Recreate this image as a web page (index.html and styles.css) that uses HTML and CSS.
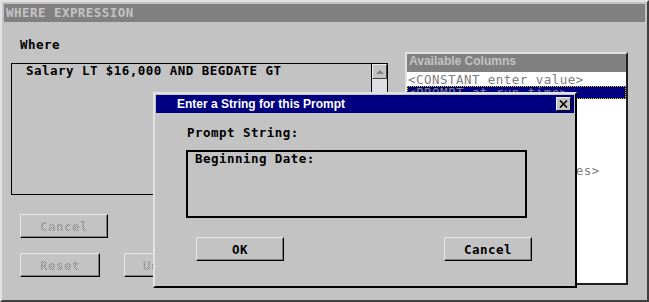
FILE: index.html
```html
<!DOCTYPE html>
<html lang="en">
<head>
    <meta charset="UTF-8">
    <meta name="viewport" content="width=device-width, initial-scale=1.0">
    <title>Where Expression</title>
    <link rel="stylesheet" href="styles.css">
</head>
<body>
    <div class="window">
        <div class="titlebar">WHERE EXPRESSION</div>
        <div class="content">
            <div class="left">
                <div class="label">Where</div>
                <div class="where-box">
                    <div class="where-text">Salary LT $16,000 AND BEGDATE GT</div>
                    <div class="scrollbar">
                        <div class="scroll-up"><span class="arrow-up"></span></div>
                        <div class="scroll-track"></div>
                    </div>
                </div>
                <div class="btn-row first">
                    <button class="btn wide" disabled><span class="stipple">Cancel</span></button>
                </div>
                <div class="btn-row">
                    <button class="btn" disabled><span class="stipple">Reset</span></button>
                    <button class="btn short" disabled><span class="stipple">Undo</span></button>
                </div>
            </div>
            <div class="columns">
                <div class="columns-head">Available Columns</div>
                <ul class="columns-list">
                    <li>&lt;CONSTANT enter value&gt;</li>
                    <li class="selected">&lt;PROMPT at run-time&gt;</li>
                    <li></li>
                    <li></li>
                    <li></li>
                    <li></li>
                    <li></li>
                    <li>&lt;LOOKUP distinct values&gt;</li>
                </ul>
            </div>
        </div>

        <div class="dialog">
            <div class="dialog-title">
                <span>Enter a String for this Prompt</span>
                <span class="close-btn">
                    <svg width="9" height="8" viewBox="0 0 9 8"><path d="M1 0.5 L8 7.5 M8 0.5 L1 7.5" stroke="#000" stroke-width="1.6" fill="none"/></svg>
                </span>
            </div>
            <div class="dialog-body">
                <div class="prompt-label">Prompt String:</div>
                <div class="prompt-box">Beginning Date:</div>
                <div class="dialog-buttons">
                    <button class="btn wide">OK</button>
                    <button class="btn wide">Cancel</button>
                </div>
            </div>
        </div>
    </div>
</body>
</html>
```

FILE: styles.css
```css
* {
    box-sizing: border-box;
}

body {
    margin: 0;
    background: #c4c3c4;
    font-family: "DejaVu Sans Mono", monospace;
    font-size: 12.5px;
    letter-spacing: 0.46px;
    color: #000;
}

.window {
    position: relative;
    width: 649px;
    height: 302px;
    background: #c4c3c4;
    border: 2px solid;
    border-color: #e2e2e2 #404040 #404040 #e2e2e2;
}

.titlebar {
    margin: 2px;
    height: 18px;
    line-height: 18px;
    padding-left: 2px;
    background: #808080;
    color: #c4c3c4;
    font-weight: bold;
}

.content {
    display: flex;
    gap: 17px;
    padding: 14px 0 0 9px;
}

.left {
    width: 377px;
}

.label {
    padding-left: 9px;
    line-height: 14px;
    font-weight: bold;
}

.where-box {
    display: flex;
    margin-top: 11px;
    height: 132px;
    border: 1px solid #000;
}

.where-text {
    flex: 1;
    padding-left: 14px;
    line-height: 14px;
    font-weight: bold;
    white-space: pre;
}

.scrollbar {
    width: 16px;
    display: flex;
    flex-direction: column;
    border-left: 1px solid #000;
}

.scroll-up {
    height: 15px;
    display: flex;
    align-items: center;
    justify-content: center;
    background: #c4c3c4;
    border: 1px solid;
    border-color: #ececec #404040 #404040 #ececec;
}

.arrow-up {
    width: 0;
    height: 0;
    border-left: 4px solid transparent;
    border-right: 4px solid transparent;
    border-bottom: 4px solid #808080;
}

.scroll-track {
    flex: 1;
    background: #dfdee2;
}

.btn-row {
    display: flex;
    gap: 24px;
    margin: 15px 0 0 9px;
}

.btn-row.first {
    margin-top: 19px;
}

.btn {
    width: 80px;
    height: 24px;
    padding: 0;
    background: #c4c3c4;
    border: 1px solid;
    border-color: #e8e8e8 #000 #000 #e8e8e8;
    box-shadow: inset -1px -1px 0 #808080;
    font-family: inherit;
    font-size: inherit;
    letter-spacing: inherit;
    font-weight: bold;
    color: #000;
}

.btn.wide {
    width: 88px;
}

.btn.short {
    width: 70px;
}

.stipple {
    color: transparent;
    background-image: conic-gradient(#7a7a7a 25%, transparent 0 50%, #7a7a7a 0 75%, transparent 0);
    background-size: 2px 2px;
    -webkit-background-clip: text;
    background-clip: text;
}

.columns {
    display: flex;
    flex-direction: column;
    margin-top: 14px;
    width: 223px;
    height: 233px;
    border: 2px solid;
    border-color: #e2e2e2 #202020 #202020 #e2e2e2;
    background: #fff;
}

.columns-head {
    height: 18px;
    line-height: 18px;
    padding-left: 2px;
    background: #808080;
    color: #c4c3c4;
    font: bold 12px "Liberation Sans", sans-serif;
    letter-spacing: 0;
}

.columns-list {
    flex: 1;
    margin: 0;
    padding: 1px 0 0;
    list-style: none;
    background: #fff;
}

.columns-list li {
    height: 13px;
    line-height: 13px;
    padding-left: 1px;
    color: #808080;
    white-space: pre;
}

.columns-list li.selected {
    background: #000080;
    outline: 1px dotted #d8d000;
    outline-offset: -1px;
}

.dialog {
    position: absolute;
    left: 151px;
    top: 90px;
    width: 424px;
    height: 196px;
    background: #c4c3c4;
    border: 2px solid;
    border-color: #e2e2e2 #000 #000 #e2e2e2;
}

.dialog-title {
    display: flex;
    align-items: center;
    justify-content: space-between;
    margin: 1px;
    height: 18px;
    padding: 0 3px 0 21px;
    background: #000080;
    color: #fff;
    font: bold 12px "Liberation Sans", sans-serif;
    letter-spacing: 0;
}

.close-btn {
    width: 15px;
    height: 14px;
    display: flex;
    align-items: center;
    justify-content: center;
    background: #c4c3c4;
    border: 1px solid;
    border-color: #ececec #000 #000 #ececec;
}

.dialog-body {
    padding-left: 31px;
}

.prompt-label {
    margin-top: 13px;
    padding-left: 1px;
    line-height: 14px;
    font-weight: bold;
}

.prompt-box {
    margin-top: 10px;
    width: 341px;
    height: 68px;
    border: 2px solid #000;
    padding-left: 7px;
    line-height: 14px;
    font-weight: bold;
}

.dialog-buttons {
    display: flex;
    justify-content: space-between;
    width: 336px;
    margin: 19px 0 0 10px;
}
```
